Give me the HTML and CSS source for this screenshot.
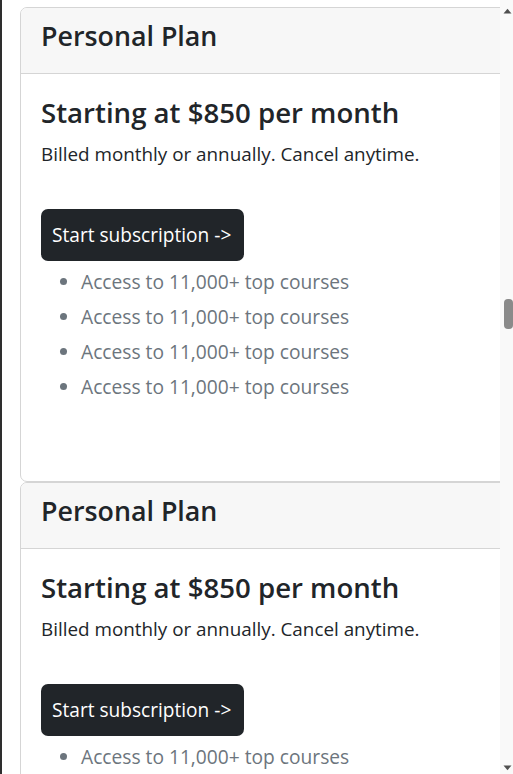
FILE: index.html
```html
<!DOCTYPE html>
<html lang="en">
<head>
<meta charset="utf-8">
<title>Plans</title>
<link rel="stylesheet" href="styles.css">
</head>
<body>
<div class="window">
  <div class="content">
    <div class="card">
      <div class="card-header"><h3 class="card-title">Personal Plan</h3></div>
      <div class="card-body">
        <h2 class="price">Starting at $850 per month</h2>
        <p class="note">Billed monthly or annually. Cancel anytime.</p>
        <a class="btn" href="#">Start subscription -&gt;</a>
        <ul class="features">
          <li>Access to 11,000+ top courses</li>
          <li>Access to 11,000+ top courses</li>
          <li>Access to 11,000+ top courses</li>
          <li>Access to 11,000+ top courses</li>
        </ul>
      </div>
    </div>
    <div class="card">
      <div class="card-header"><h3 class="card-title">Personal Plan</h3></div>
      <div class="card-body">
        <h2 class="price">Starting at $850 per month</h2>
        <p class="note">Billed monthly or annually. Cancel anytime.</p>
        <a class="btn" href="#">Start subscription -&gt;</a>
        <ul class="features">
          <li>Access to 11,000+ top courses</li>
          <li>Access to 11,000+ top courses</li>
          <li>Access to 11,000+ top courses</li>
          <li>Access to 11,000+ top courses</li>
        </ul>
      </div>
    </div>
  </div>
  <div class="scrollbar">
    <svg class="arrow arrow-up" width="9" height="6" viewBox="0 0 9 6"><path d="M0.5 5.5 L4.5 0.8 L8.5 5.5 Z" fill="#505050"/></svg>
    <div class="thumb"></div>
    <svg class="arrow arrow-down" width="9" height="6" viewBox="0 0 9 6"><path d="M0.5 0.5 L4.5 5.2 L8.5 0.5 Z" fill="#505050"/></svg>
  </div>
</div>
</body>
</html>
```
FILE: styles.css
```css
html, body {
  margin: 0;
  padding: 0;
  overflow: hidden;
  background: #ffffff;
}

body {
  font-family: "Open Sans", "Noto Sans", sans-serif;
  color: #212529;
}

.window {
  position: relative;
  height: 774px;
  border-left: 2px solid #2e2e2e;
  overflow: hidden;
}

.content {
  padding: 7px 0 0 18px;
}

.card {
  box-sizing: border-box;
  width: 510px;
  height: 475px;
  border: 1px solid #d5d5d5;
  border-radius: 7px;
  overflow: hidden;
  background: #fff;
}

.card-header {
  box-sizing: border-box;
  height: 66px;
  padding: 11px 20px 0 20px;
  background: #f7f7f7;
  border-bottom: 1px solid #d5d5d5;
}

.card-title {
  margin: 0;
  font-size: 26.8px;
  font-weight: 600;
  line-height: 34px;
}

.card-body {
  padding: 21px 20px 0 20px;
}

.price {
  margin: 0 0 11px;
  font-size: 27.6px;
  font-weight: 600;
  line-height: 34px;
}

.note {
  margin: 0 0 41px;
  font-size: 18.85px;
  line-height: 28px;
}

.btn {
  display: inline-block;
  box-sizing: border-box;
  height: 52px;
  padding: 12px 13px 0 11px;
  background: #212529;
  color: #fff;
  border-radius: 7px;
  font-size: 19.1px;
  line-height: 28px;
  text-decoration: none;
}

.features {
  margin: 3px 0 0;
  padding-left: 40px;
  color: #6c757d;
  font-size: 19.2px;
  line-height: 35px;
}

.scrollbar {
  position: absolute;
  top: 0;
  right: 0;
  width: 13px;
  height: 100%;
  background: #f9f9f9;
}

.arrow {
  position: absolute;
  left: 3px;
}

.arrow-up {
  top: 8px;
}

.arrow-down {
  bottom: 3px;
}

.thumb {
  position: absolute;
  top: 299px;
  left: 4px;
  width: 9px;
  height: 30px;
  border-radius: 4px;
  background: #8a8a8a;
}
```
